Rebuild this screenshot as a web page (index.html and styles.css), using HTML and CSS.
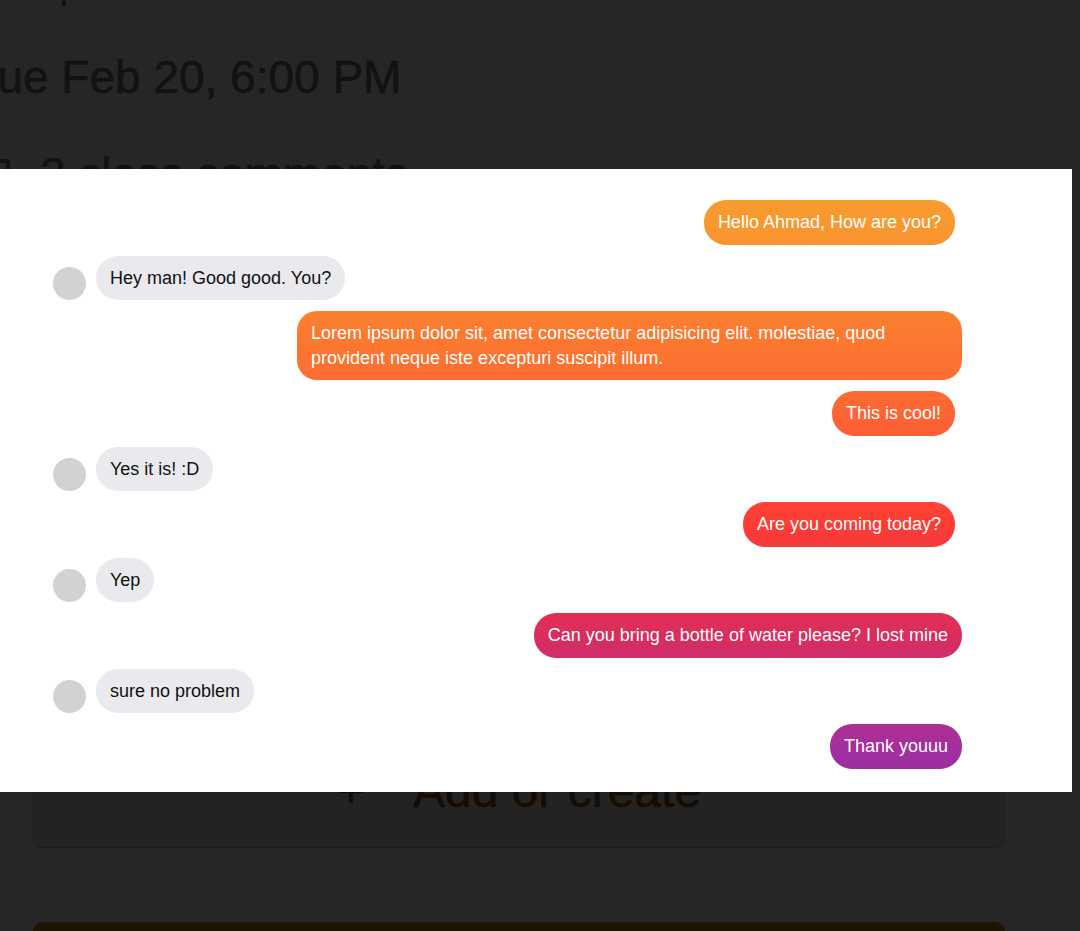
FILE: index.html
```html
<!DOCTYPE html>
<html lang="en">
<head>
<meta charset="utf-8">
<title>Chat</title>
<link rel="stylesheet" href="styles.css">
</head>
<body>
<div class="page">
  <div class="stub"></div>
  <h1 class="date">Tue Feb 20, 6:00 PM</h1>
  <div class="comments"><span class="cicon"></span><span>2 class comments</span></div>
  <div class="card"><span class="plus">+</span><span class="add">Add or create</span></div>
  <div class="bar"></div>
</div>

<div class="modal">
  <div class="chat">
    <div class="msg out">Hello Ahmad, How are you?</div>
    <div class="row"><span class="avatar"></span><div class="msg in">Hey man! Good good. You?</div></div>
    <div class="msg out wide long">Lorem ipsum dolor sit, amet consectetur adipisicing elit. molestiae, quod provident neque iste excepturi suscipit illum.</div>
    <div class="msg out">This is cool!</div>
    <div class="row"><span class="avatar"></span><div class="msg in">Yes it is! :D</div></div>
    <div class="msg out">Are you coming today?</div>
    <div class="row"><span class="avatar"></span><div class="msg in">Yep</div></div>
    <div class="msg out wide">Can you bring a bottle of water please? I lost mine</div>
    <div class="row"><span class="avatar"></span><div class="msg in">sure no problem</div></div>
    <div class="msg out wide">Thank youuu</div>
  </div>
</div>
</body>
</html>
```

FILE: styles.css
```css
* { box-sizing: border-box; }

html, body {
  margin: 0;
  padding: 0;
  height: 100%;
}

body {
  background: #262626;
  overflow: hidden;
  font-family: "Liberation Sans", Arial, sans-serif;
  position: relative;
}

/* dimmed page behind the overlay */
.page {
  color: #121212;
}

.stub {
  width: 4px;
  height: 6px;
  margin-left: 62px;
  background: #121212;
}

.date {
  margin: 44px 0 0 -29px;
  font-size: 46px;
  line-height: 54px;
  font-weight: 400;
  white-space: nowrap;
  -webkit-text-stroke: 0.6px #121212;
}

.comments {
  margin-top: 43px;
  display: flex;
  align-items: center;
  font-size: 46px;
  line-height: 54px;
  white-space: nowrap;
  -webkit-text-stroke: 0.6px #121212;
}

.cicon {
  width: 24px;
  height: 30px;
  margin-left: -14px;
  margin-right: 30px;
  border: 4px solid #121212;
  border-radius: 3px;
}

.card {
  margin: 449px 0 0 33px;
  width: 972px;
  height: 198px;
  border: 1px solid #1c1c1c;
  border-radius: 10px;
  background: #232323;
  display: flex;
  align-items: flex-end;
  justify-content: center;
  gap: 48px;
  padding-bottom: 32px;
  font-size: 48px;
  line-height: 48px;
  color: #150c04;
  -webkit-text-stroke: 0.6px #150c04;
}

.bar {
  margin: 74px 0 0 33px;
  width: 972px;
  height: 30px;
  border-radius: 10px 10px 0 0;
  background: #1f1304;
}

/* overlay chat modal */
.modal {
  position: absolute;
  top: 169px;
  left: 0;
  width: 1072px;
  height: 623px;
  background: #ffffff;
}

.chat {
  display: flex;
  flex-direction: column;
  gap: 11px;
  padding: 31px 0 0 53px;
}

.row {
  display: flex;
  align-items: flex-end;
  gap: 10px;
}

.avatar {
  width: 33px;
  height: 33px;
  border-radius: 50%;
  background: #d2d2d2;
  flex: none;
}

.msg {
  font-size: 18px;
  line-height: 24.5px;
  padding: 10px 14px;
  border-radius: 22px;
  white-space: nowrap;
}

.msg.in {
  background: #e9e9ee;
  color: #111111;
}

.msg.out {
  align-self: flex-end;
  margin-right: 117px;
  color: #ffffff;
  background: linear-gradient(to bottom,
    #f8a02e 170px,
    #f8992f 222px,
    #fc792f 335px,
    #fd6534 413px,
    #fe3c35 524px,
    #da2d5d 635px,
    #a52f9d 746px,
    #8e2eaa 800px) fixed;
}

.msg.out.wide {
  margin-right: 110px;
}

.msg.long {
  white-space: normal;
  width: 665px;
  border-radius: 20px;
}
```
